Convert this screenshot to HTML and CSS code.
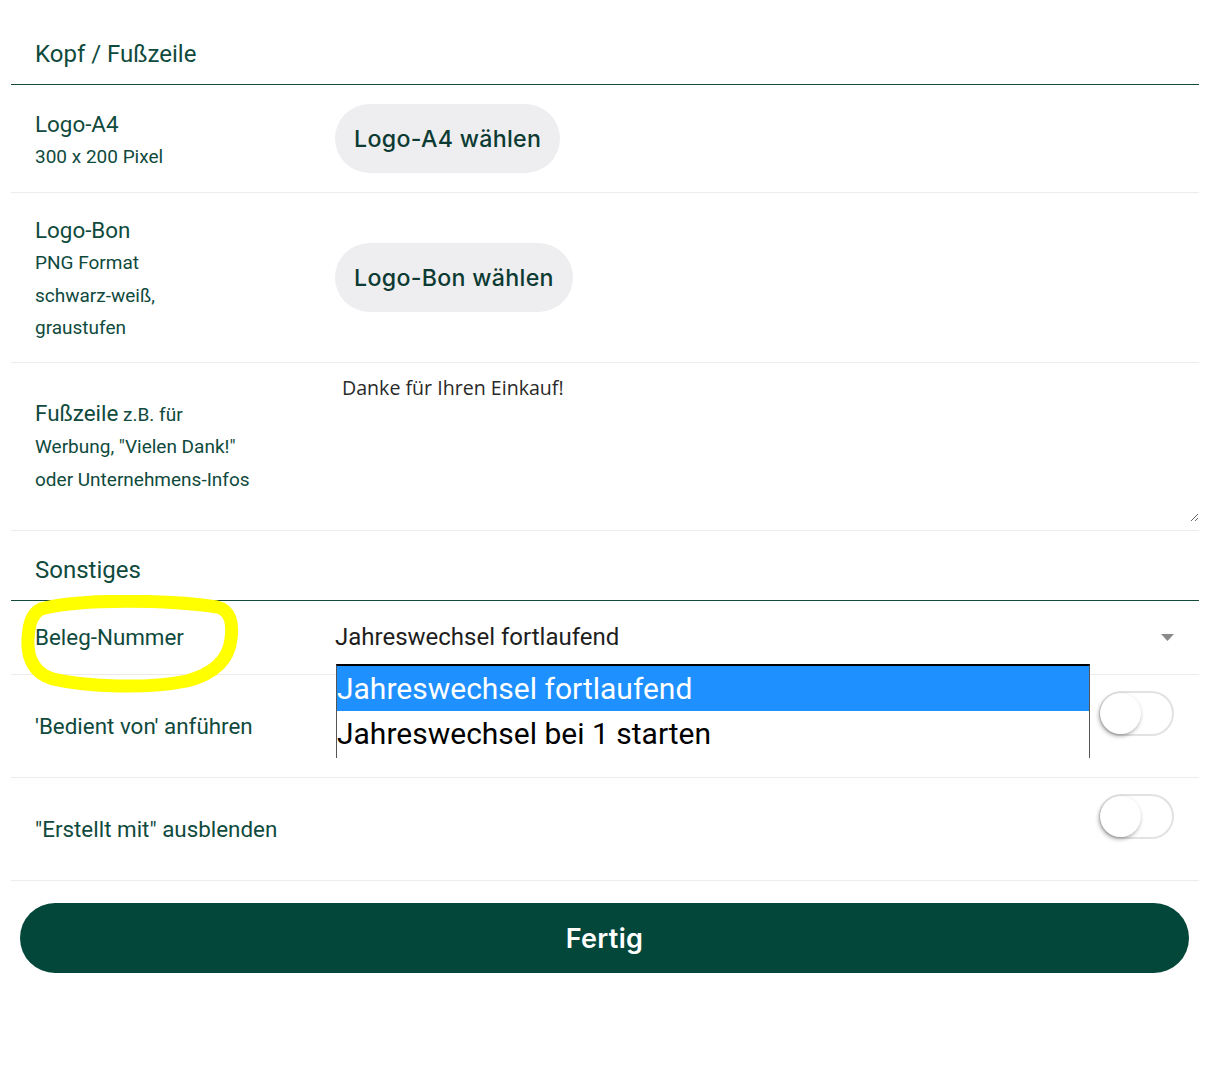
FILE: index.html
```html
<!DOCTYPE html>
<html lang="de">
<head>
<meta charset="utf-8">
<title>Einstellungen</title>
<link rel="stylesheet" href="styles.css">
</head>
<body>
<div class="page">
  <div class="section-title first">Kopf / Fußzeile</div>

  <div class="row">
    <div class="label">
      <div class="title">Logo-A4</div>
      <div class="sub">300 x 200 Pixel</div>
    </div>
    <div class="control">
      <button class="pill">Logo-A4 wählen</button>
    </div>
  </div>

  <div class="row">
    <div class="label">
      <div class="title">Logo-Bon</div>
      <div class="sub">PNG Format<br>schwarz-weiß,<br>graustufen</div>
    </div>
    <div class="control">
      <button class="pill">Logo-Bon wählen</button>
    </div>
  </div>

  <div class="row row-textarea">
    <div class="label">
      <div class="sub"><span class="title">Fußzeile</span> z.B. für<br>Werbung, "Vielen Dank!"<br>oder Unternehmens-Infos</div>
    </div>
    <textarea class="footer-text">Danke für Ihren Einkauf!</textarea>
  </div>

  <div class="section-title second">Sonstiges</div>

  <div class="row row-select">
    <div class="label">
      <div class="title">Beleg-Nummer</div>
    </div>
    <div class="select">
      <span class="select-value">Jahreswechsel fortlaufend</span>
      <svg class="select-arrow" width="13" height="7" viewBox="0 0 13 7"><path d="M0 0 L13 0 L6.5 7 Z" fill="#8a8a8a"/></svg>
    </div>
    <div class="listbox">
      <div class="option selected">Jahreswechsel fortlaufend</div>
      <div class="option">Jahreswechsel bei 1 starten</div>
    </div>
  </div>

  <div class="row row-toggle">
    <div class="label">
      <div class="title">'Bedient von' anführen</div>
    </div>
    <div class="toggle"><span class="thumb"></span></div>
  </div>

  <div class="row row-toggle">
    <div class="label">
      <div class="title">"Erstellt mit" ausblenden</div>
    </div>
    <div class="toggle"><span class="thumb"></span></div>
  </div>

  <button class="done">Fertig</button>

  <svg class="marker" width="224" height="100" viewBox="0 0 224 100">
    <path d="M20 14 C60 3 150 5 196 12 C210 15 212 30 210 44 C208 62 196 78 166 86 C126 94 66 92 32 84 C12 78 6 62 7 44 C8 26 12 18 20 14 Z" fill="none" stroke="#ffff00" stroke-width="13" stroke-linejoin="round"/>
  </svg>
</div>
</body>
</html>
```

FILE: styles.css
```css
html, body {
  margin: 0;
  padding: 0;
  background: #ffffff;
}

body {
  font-family: Roboto, "Liberation Sans", Arial, sans-serif;
  color: #0f4a3d;
}

.page {
  position: relative;
  margin-left: 11px;
  width: 1188px;
}

.section-title {
  font-size: 24px;
  line-height: 30px;
  padding: 0 24px 15px;
  border-bottom: 1px solid #154a3f;
  color: #0f4a3d;
}

.section-title.first {
  padding-top: 39px;
}

.section-title.second {
  padding-top: 24px;
}

.row {
  display: flex;
  align-items: center;
  padding: 19px 24px;
  border-bottom: 1px solid #ececec;
}

.label {
  width: 300px;
  flex: 0 0 300px;
  padding-top: 2px;
  margin-bottom: -2px;
}

.title {
  font-size: 22.4px;
  line-height: 33px;
}

.sub {
  font-size: 19px;
  line-height: 32.7px;
}

.sub .title {
  font-size: 22.4px;
}

.control {
  flex: 1;
  display: flex;
  align-items: center;
}

.pill {
  height: 69px;
  padding: 0 19px;
  border: none;
  border-radius: 35px;
  background: #eeeef0;
  color: #0d3b33;
  font-family: Inter, Roboto, sans-serif;
  font-size: 23.2px;
  font-weight: 500;
  letter-spacing: 0.3px;
  cursor: pointer;
}

.row-textarea {
  padding: 0 0 0 24px;
  height: 167px;
}

.row-textarea .label {
  padding-top: 0;
  margin-bottom: 0;
}

.footer-text {
  flex: 1;
  align-self: flex-start;
  height: 159px;
  box-sizing: border-box;
  margin: 0;
  padding: 13px 7px;
  border: none;
  outline: none;
  font-family: "Open Sans", "Noto Sans", sans-serif;
  font-size: 19.6px;
  line-height: 24px;
  color: #2a2a2a;
  background: #ffffff;
}

.row-select {
  position: relative;
  padding: 19px 24px 20px;
}

.row-select .label {
  padding-top: 1px;
  margin-bottom: 0;
}

.select {
  flex: 1;
  display: flex;
  align-items: center;
  justify-content: space-between;
  font-size: 24px;
  line-height: 33px;
  color: #1e1e1e;
  margin-right: 1px;
}

.select-arrow {
  display: block;
}

.listbox {
  position: absolute;
  left: 325px;
  top: 63px;
  width: 752px;
  height: 92px;
  border-top: 2px solid #000;
  border-left: 1px solid #555;
  border-right: 1px solid #555;
  background: #ffffff;
  z-index: 2;
  overflow: hidden;
}

.option {
  height: 45px;
  line-height: 45px;
  padding-left: 0;
  font-size: 30px;
  color: #000;
  white-space: nowrap;
}

.option.selected {
  background: #1e90ff;
  color: #ffffff;
}

.row-toggle {
  padding: 16px 25px 17px 24px;
  justify-content: space-between;
}

.row-toggle .label {
  padding-top: 1px;
  margin-bottom: 0;
}

.toggle {
  position: relative;
  width: 75px;
  height: 45px;
  box-sizing: border-box;
  border: 2px solid #e2e2e2;
  border-radius: 23px;
  background: #ffffff;
  margin-bottom: 24px;
}

.thumb {
  position: absolute;
  left: -1px;
  top: 0px;
  width: 41px;
  height: 41px;
  border-radius: 50%;
  background: #ffffff;
  box-shadow: -1px 2px 4px rgba(0, 0, 0, 0.35);
}

.done {
  display: block;
  margin: 22px 10px 0 9px;
  width: 1169px;
  height: 70px;
  border: none;
  border-radius: 35px;
  background: #03473b;
  color: #ffffff;
  font-family: Inter, Roboto, sans-serif;
  font-size: 27px;
  font-weight: 600;
  letter-spacing: 0.3px;
  cursor: pointer;
}

.marker {
  position: absolute;
  left: 10px;
  top: 595px;
  pointer-events: none;
  z-index: 3;
}
```
